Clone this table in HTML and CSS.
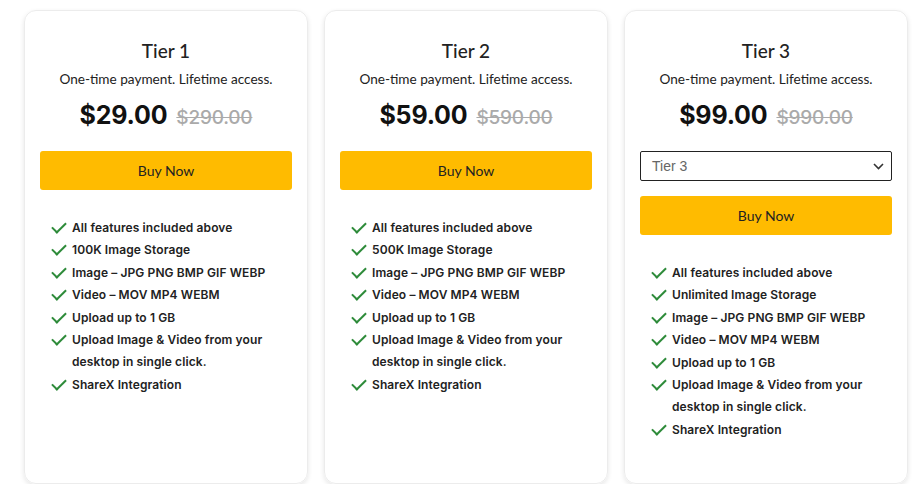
FILE: index.html
```html
<!DOCTYPE html>
<html lang="en">
<head>
<meta charset="utf-8">
<title>Pricing</title>
<link rel="stylesheet" href="styles.css">
</head>
<body>
<div class="plans">
  <div class="card">
    <h2 class="title">Tier 1</h2>
    <p class="sub">One-time payment. Lifetime access.</p>
    <div class="price"><span class="now">$29.00</span><span class="was">$290.00</span></div>
    <button class="buy">Buy Now</button>
    <ul class="features">
      <li>All features included above</li>
      <li>100K Image Storage</li>
      <li>Image – JPG PNG BMP GIF WEBP</li>
      <li>Video – MOV MP4 WEBM</li>
      <li>Upload up to 1 GB</li>
      <li>Upload Image &amp; Video from your desktop in single click.</li>
      <li>ShareX Integration</li>
    </ul>
  </div>
  <div class="card">
    <h2 class="title">Tier 2</h2>
    <p class="sub">One-time payment. Lifetime access.</p>
    <div class="price"><span class="now">$59.00</span><span class="was">$590.00</span></div>
    <button class="buy">Buy Now</button>
    <ul class="features">
      <li>All features included above</li>
      <li>500K Image Storage</li>
      <li>Image – JPG PNG BMP GIF WEBP</li>
      <li>Video – MOV MP4 WEBM</li>
      <li>Upload up to 1 GB</li>
      <li>Upload Image &amp; Video from your desktop in single click.</li>
      <li>ShareX Integration</li>
    </ul>
  </div>
  <div class="card">
    <h2 class="title">Tier 3</h2>
    <p class="sub">One-time payment. Lifetime access.</p>
    <div class="price"><span class="now">$99.00</span><span class="was">$990.00</span></div>
    <div class="select">
      <span>Tier 3</span>
      <svg width="11" height="7" viewBox="0 0 11 7"><path d="M1 1 L5.5 5.5 L10 1" fill="none" stroke="#333" stroke-width="1.6"/></svg>
    </div>
    <button class="buy buy-tight">Buy Now</button>
    <ul class="features">
      <li>All features included above</li>
      <li>Unlimited Image Storage</li>
      <li>Image – JPG PNG BMP GIF WEBP</li>
      <li>Video – MOV MP4 WEBM</li>
      <li>Upload up to 1 GB</li>
      <li>Upload Image &amp; Video from your desktop in single click.</li>
      <li>ShareX Integration</li>
    </ul>
  </div>
</div>
</body>
</html>
```

FILE: styles.css
```css
* { box-sizing: border-box; }
html, body { margin: 0; padding: 0; background: #fff; }
body { font-family: Lato, "Liberation Sans", sans-serif; color: #222; }

.plans {
  display: flex;
  gap: 16px;
  padding: 10px 0 0 24px;
  align-items: stretch;
}

.card {
  width: 284px;
  height: 474px;
  border: 1px solid #ececec;
  border-radius: 12px;
  box-shadow: 0 2px 5px rgba(0,0,0,0.10);
  padding: 28px 15px 40px;
  display: flex;
  flex-direction: column;
}

.title {
  margin: 0;
  text-align: center;
  font-size: 19px;
  line-height: 24px;
  font-weight: 500;
  color: #222;
}

.sub {
  margin: 6px 0 0;
  text-align: center;
  font-size: 13.6px;
  line-height: 20px;
  color: #222;
}

.price {
  margin-top: 9px;
  display: flex;
  justify-content: center;
  align-items: baseline;
  gap: 9px;
  line-height: 34px;
  font-family: Inter, "Noto Sans", sans-serif;
}
.now { font-size: 25px; font-weight: 700; color: #111; letter-spacing: -0.2px; }
.was { font-size: 19px; font-weight: 500; color: #aaa; text-decoration: line-through; letter-spacing: -0.2px; }

.buy {
  margin-top: 16px;
  height: 39px;
  border: none;
  border-radius: 3px;
  background: #ffbb00;
  color: #222;
  font-family: Lato, "Liberation Sans", sans-serif;
  font-size: 14px;
  width: 100%;
}
.buy-tight { margin-top: 15px; }

.select {
  margin-top: 16px;
  height: 30px;
  border: 1px solid #222;
  border-radius: 2px;
  display: flex;
  align-items: center;
  justify-content: space-between;
  padding: 0 7px 0 11px;
  font-family: "Liberation Sans", Arial, sans-serif;
  font-size: 14px;
  color: #666;
}

.features {
  list-style: none;
  margin: 27px 0 0;
  padding: 0 0 0 32px;
  font-family: Inter, "Noto Sans", sans-serif;
  font-size: 12px;
  font-weight: 600;
  letter-spacing: 0.1px;
  line-height: 22.4px;
  color: #222;
}
.features li {
  position: relative;
  padding-right: 6px;
}
.features li::before {
  content: "";
  position: absolute;
  left: -20px;
  top: 5px;
  width: 12px;
  height: 6px;
  border-left: 2px solid #2e8b3a;
  border-bottom: 2px solid #2e8b3a;
  transform: rotate(-45deg);
  transform-origin: center;
}
```
